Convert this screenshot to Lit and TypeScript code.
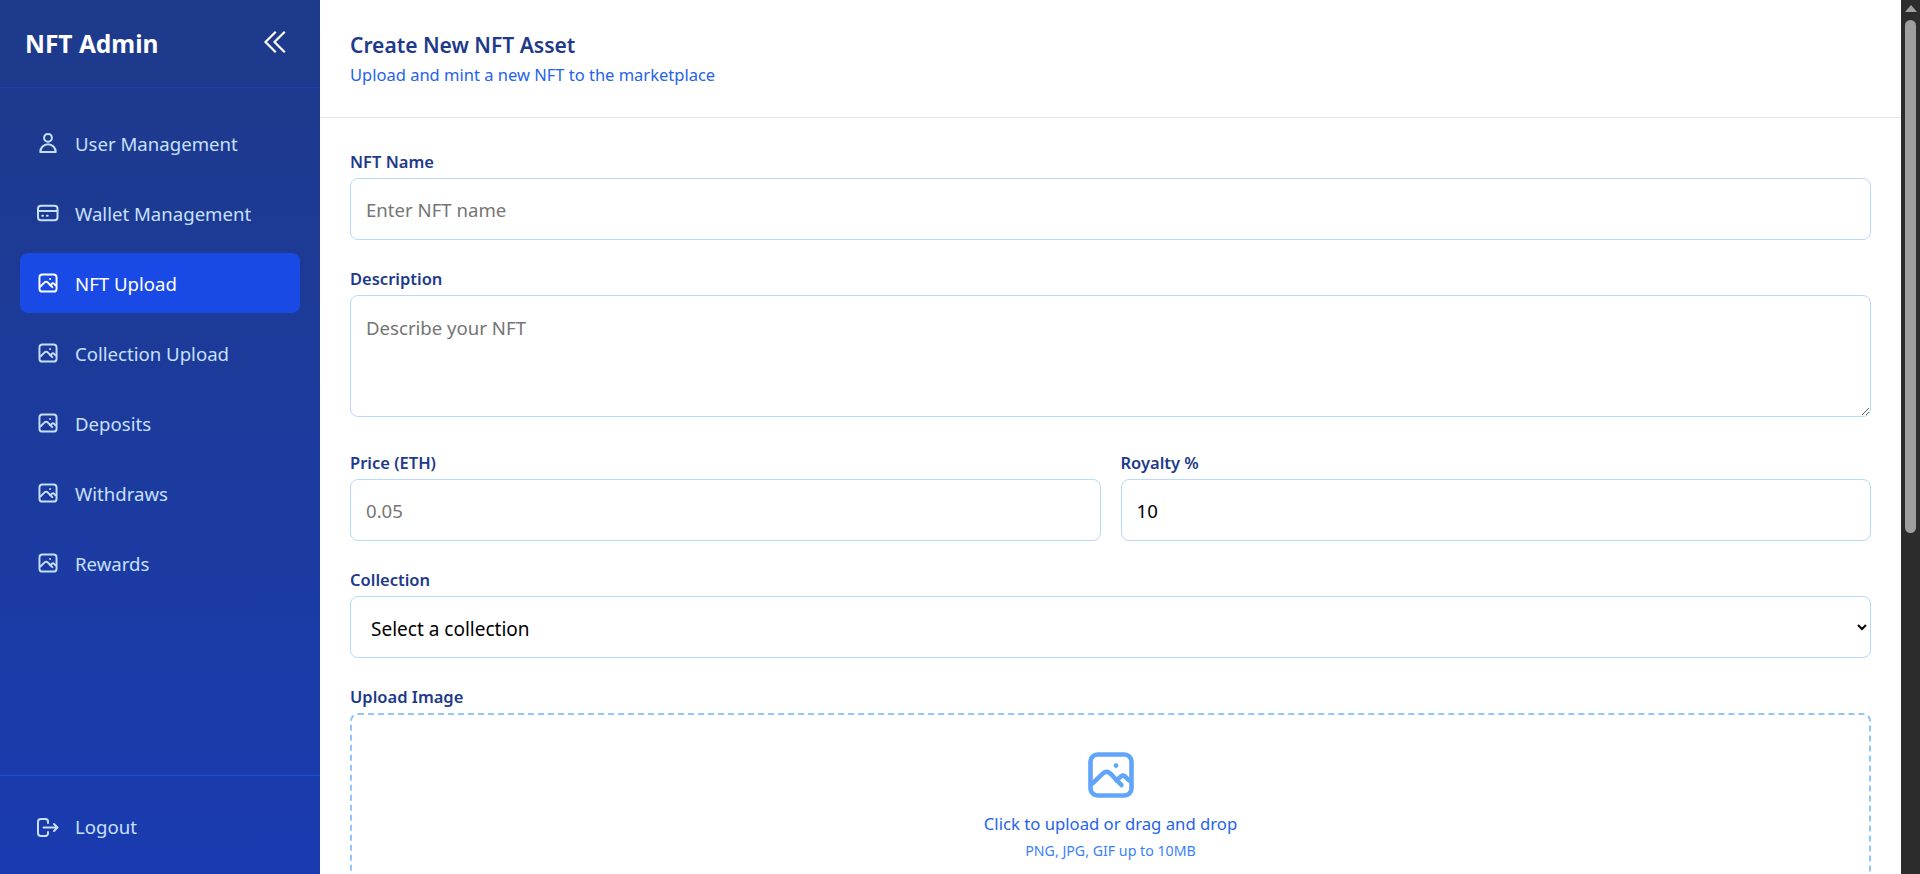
import { LitElement, html, css, svg } from "lit";
import { customElement } from "lit/decorators.js";

const photo = svg`<svg class="photo" viewBox="0 0 24 24"><rect x="1.750" y="1.750" width="20.500" height="20.500" rx="3.500"/><path d="M2.800 16.200 L8 11.200 Q9.800 9.600 11.600 11.200 L17.200 17"/><path d="M14.800 14.700 L17 12.700 Q18 11.900 19 12.700 L21 14.700"/><circle class="dot" cx="14.500" cy="7.300" r="1.200"/></svg>`;
const user = svg`<svg viewBox="0 0 24 24"><circle cx="12" cy="6.800" r="3.900"/><path d="M4.300 21 a7.700 7.700 0 0 1 15.400 0Z"/></svg>`;
const wallet = svg`<svg viewBox="0 0 24 24"><rect x="2" y="4.800" width="19.500" height="14.400" rx="3"/><path d="M2 10h19.500"/><path d="M6.300 14.800h.7M11 14.800h.7"/></svg>`;
const logout = svg`<svg viewBox="0 0 24 24"><path d="M12 8V6.500A2.500 2.500 0 0 0 9.500 4H5A3 3 0 0 0 2 7v11a3 3 0 0 0 3 3h4.500a2.500 2.500 0 0 0 2.500-2.500V17"/><path d="M7.500 12.500H21.500M18 9l3.500 3.500L18 16"/></svg>`;

const nav = [
  { label: "User Management", icon: user },
  { label: "Wallet Management", icon: wallet },
  { label: "NFT Upload", icon: photo, active: true },
  { label: "Collection Upload", icon: photo },
  { label: "Deposits", icon: photo },
  { label: "Withdraws", icon: photo },
  { label: "Rewards", icon: photo },
];

@customElement("app-root")
export class AppRoot extends LitElement {
  static styles = css`
    :host {
      display: flex;
      height: 100vh;
      overflow: hidden;
      font-family: "Noto Sans", "Open Sans", sans-serif;
      background: #fff;
    }
    * { box-sizing: border-box; }
    .sidebar {
      width: 320px;
      flex: none;
      display: flex;
      flex-direction: column;
      background: linear-gradient(180deg, #1e3a8a, #1a3bb0);
      color: #c8e0ff;
    }
    .brand {
      height: 88px;
      flex: none;
      padding: 0 34px 0 25px;
      display: flex;
      align-items: center;
      justify-content: space-between;
      border-bottom: 1px solid #1e40af;
    }
    .brand h1 { margin: 0; font-size: 24.500px; line-height: 32px; font-weight: 700; color: #fff; }
    .collapse {
      width: 24px; height: 24px; color: #fff; margin-top: -3px;
      fill: none; stroke: currentColor; stroke-width: 2.200; stroke-linecap: square; stroke-linejoin: miter;
    }
    .nav { flex: 1; padding: 25px 20px 0; display: flex; flex-direction: column; gap: 10px; }
    .item {
      height: 60px;
      border-radius: 8px;
      display: flex;
      align-items: center;
      gap: 15px;
      padding: 0 16px;
      font-size: 18.600px;
      color: #c8e0ff;
    }
    .item.active { background: #1a4ae6; color: #fff; }
    .ic { width: 24px; height: 24px; flex: none; display: flex; align-items: center; justify-content: center; }
    .ic svg {
      width: 24px; height: 24px; flex: none;
      fill: none; stroke: currentColor; stroke-width: 2; stroke-linecap: round; stroke-linejoin: round;
    }
    .ic svg.photo { width: 20px; height: 20px; stroke-width: 2.300; margin-left: -1px; }
    .dot { fill: currentColor; stroke: none; }
    .foot { padding: 3px 20px 0; border-top: 1px solid #1d4ed8; height: 99px; flex: none; display: flex; align-items: center; }
    .foot .item { width: 100%; }
    .main { flex: 1; min-width: 0; display: flex; flex-direction: column; overflow: hidden; }
    .head { flex: none; height: 118px; padding: 31px 30px 0; border-bottom: 1px solid #e5e7eb; }
    .head h2 { margin: 0; font-size: 21px; line-height: 28px; font-weight: 600; color: #1e3a8a; }
    .head p { margin: 5px 0 0; font-size: 16.500px; line-height: 22px; color: #2563eb; }
    .form { padding: 30px 30px 0; display: flex; flex-direction: column; gap: 25px; }
    .group { display: flex; flex-direction: column; min-width: 0; }
    label { font-size: 16.500px; line-height: 22px; font-weight: 600; color: #1e3a8a; padding-top: 3px; margin-bottom: 5px; }
    input, textarea, select {
      width: 100%;
      border: 1px solid #b8d8ff;
      border-radius: 8px;
      background: #fff;
      color: #000;
      font: 400 18.600px "Noto Sans", "Open Sans", sans-serif;
      padding: 0 15px;
      outline: none;
      flex: none;
    }
    select { padding: 4px 16px 0; font-size: 19px; }
    input, select { height: 62px; }
    textarea { height: 122px; padding-top: 19px; display: block; margin-bottom: 7px; }
    ::placeholder { color: #757575; }
    .row { display: grid; grid-template-columns: 1fr 1fr; gap: 20px; }
    .drop {
      height: 240px;
      flex: none;
      border: 2px dashed #93c5fd;
      border-radius: 8px;
      display: flex;
      flex-direction: column;
      align-items: center;
      padding-top: 36px;
    }
    .drop svg { width: 48px; height: 48px; fill: none; stroke: #60a5fa; stroke-width: 2.300; stroke-linecap: round; stroke-linejoin: round; flex: none; color: #60a5fa; }
    .drop .a { font-size: 16.700px; line-height: 24px; color: #2563eb; margin-top: 13px; }
    .drop .b { font-size: 14.200px; line-height: 20px; color: #3b82f6; margin-top: 5px; }
    .scroll { width: 19px; flex: none; background: #2c2c2c; display: flex; flex-direction: column; align-items: center; }
    .arrow { width: 0; height: 0; margin-top: 5px; border-left: 6.500px solid transparent; border-right: 6.500px solid transparent; border-bottom: 7px solid #a0a0a0; flex: none; }
    .thumb { width: 11px; height: 513px; margin-top: 8px; border-radius: 6px; background: #9f9f9f; flex: none; }
  `;

  render() {
    return html`
      <aside class="sidebar">
        <div class="brand">
          <h1>NFT Admin</h1>
          <svg class="collapse" viewBox="0 0 24 24"><path d="M13 2.500 3.500 12l9.500 9.500M22 2.500 12.500 12l9.500 9.500"/></svg>
        </div>
        <nav class="nav">
          ${nav.map(n => html`<div class="item ${n.active ? "active" : ""}"><span class="ic">${n.icon}</span><span>${n.label}</span></div>`)}
        </nav>
        <div class="foot"><div class="item"><span class="ic">${logout}</span><span>Logout</span></div></div>
      </aside>
      <main class="main">
        <header class="head">
          <h2>Create New NFT Asset</h2>
          <p>Upload and mint a new NFT to the marketplace</p>
        </header>
        <div class="form">
          <div class="group"><label>NFT Name</label><input placeholder="Enter NFT name" /></div>
          <div class="group"><label>Description</label><textarea placeholder="Describe your NFT"></textarea></div>
          <div class="row">
            <div class="group"><label>Price (ETH)</label><input placeholder="0.05" /></div>
            <div class="group"><label>Royalty %</label><input value="10" /></div>
          </div>
          <div class="group"><label>Collection</label><select><option>Select a collection</option></select></div>
          <div class="group"><label>Upload Image</label>
            <div class="drop">
              ${photo}
              <div class="a">Click to upload or drag and drop</div>
              <div class="b">PNG, JPG, GIF up to 10MB</div>
            </div>
          </div>
        </div>
      </main>
      <div class="scroll"><div class="arrow"></div><div class="thumb"></div></div>
    `;
  }
}
